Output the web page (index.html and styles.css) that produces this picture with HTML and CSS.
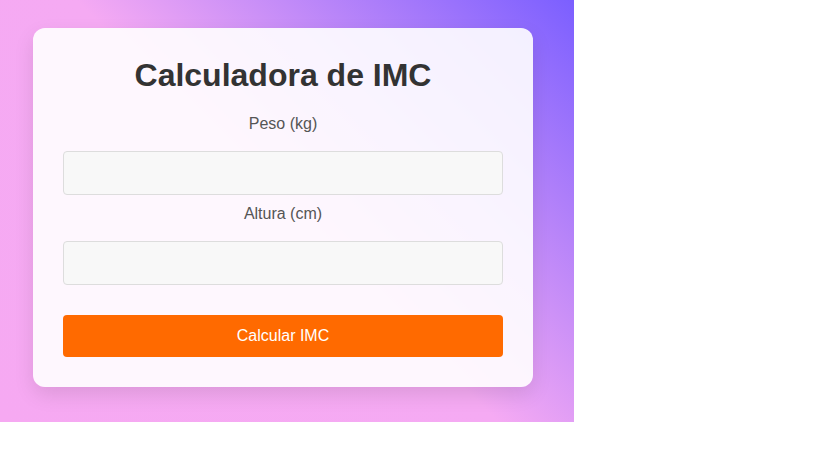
FILE: index.html
```html
<!DOCTYPE html>
<html lang="pt">
<head>
<meta charset="utf-8">
<title>Calculadora de IMC</title>
<link rel="stylesheet" href="styles.css">
</head>
<body>
<div class="page">
  <div class="card">
    <h1 class="title">Calculadora de IMC</h1>
    <label class="label" for="peso">Peso (kg)</label>
    <input class="field" id="peso" type="number">
    <label class="label" for="altura">Altura (cm)</label>
    <input class="field" id="altura" type="number">
    <button class="btn" type="button">Calcular IMC</button>
  </div>
</div>
</body>
</html>
```
FILE: styles.css
```css
html, body {
  margin: 0;
  padding: 0;
  background: #fff;
}
body {
  font-family: "Liberation Sans", Arial, sans-serif;
}
.page {
  width: 574px;
  height: 422px;
  box-sizing: border-box;
  padding: 28px 41px 0 33px;
  background: linear-gradient(45deg, #f6a9f2 0%, #f5aaf3 50%, #7b5fff 100%);
}
.card {
  width: 500px;
  box-sizing: border-box;
  padding: 30px;
  background: rgba(255, 255, 255, 0.9);
  border-radius: 12px;
  box-shadow: 0 8px 20px rgba(0, 0, 0, 0.1);
  text-align: center;
}
.title {
  margin: 0 0 22px;
  font-size: 32px;
  line-height: 35px;
  font-weight: bold;
  color: #333;
}
.label {
  display: block;
  font-size: 16px;
  line-height: 18px;
  color: #555;
  margin-bottom: 18px;
}
.field {
  display: block;
  width: 100%;
  height: 44px;
  box-sizing: border-box;
  margin: 0 0 10px;
  border: 1px solid #ddd;
  border-radius: 4px;
  background: #f8f8f8;
  font-size: 16px;
  padding: 0 10px;
}
.btn {
  display: block;
  width: 100%;
  height: 42px;
  margin-top: 30px;
  border: none;
  border-radius: 4px;
  background: #ff6a00;
  color: #fff;
  font-family: "Liberation Sans", Arial, sans-serif;
  font-size: 16px;
}
```
